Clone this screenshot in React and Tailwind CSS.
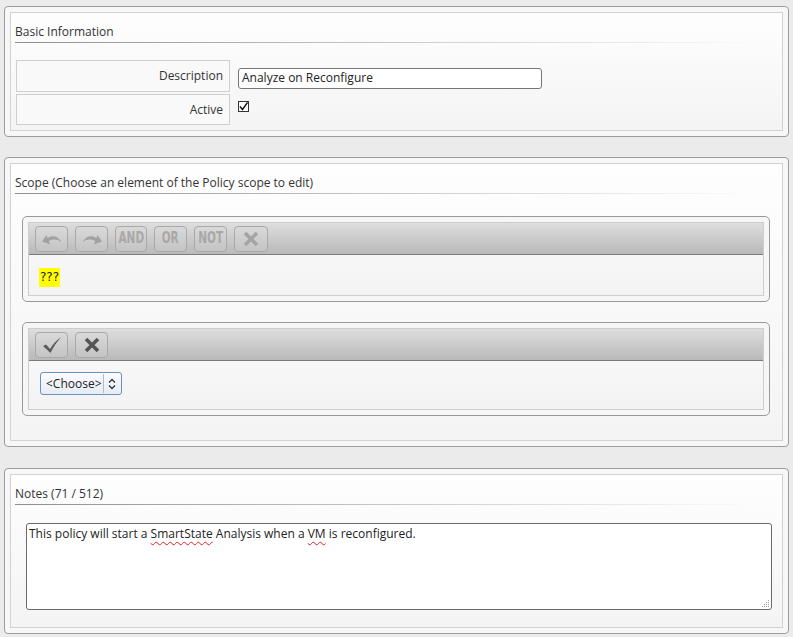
import React from "react";

const font = { fontFamily: '"Open Sans", "Noto Sans", sans-serif' };

function Panel({ title, children, className = "" }) {
  return (
    <div className={"rounded-[4px] border border-[#9c9c9c] bg-[#f7f7f7] p-[5px] " + className}>
      <div className="border border-[#d2d2d2] bg-gradient-to-b from-[#fefefe] to-[#f4f4f4] px-[4px]">
        <div className="pt-[9px] text-[12px] leading-[20px] text-[#333]">{title}</div>
        <div className="h-px bg-gradient-to-r from-[#8f8f8f] via-[#c8c8c8] to-transparent mr-[20px]" />
        {children}
      </div>
    </div>
  );
}

function ToolBtn({ children, w = "w-[33px]" }) {
  return (
    <div className={"flex h-[26px] items-center justify-center rounded-[4px] border border-[#a9a9a9] bg-gradient-to-b from-[#d9d9d9] to-[#c4c4c4] " + w}>
      {children}
    </div>
  );
}

function Undo({ flip }) {
  return (
    <svg width="22" height="14" viewBox="0 0 22 14" style={flip ? { transform: "scaleX(-1)" } : undefined}>
      <path d="M1 9.5 L5.5 3 L6.6 6 C11 3 16.5 3.5 20.5 10 C16 6.8 11.5 6.8 7.8 9 L9.2 12.5 Z" fill="#a2a2a2" />
    </svg>
  );
}

function XIcon({ color }) {
  return (
    <svg width="18" height="18" viewBox="0 0 18 18">
      <path d="M3 3 L15 15 M15 3 L3 15" stroke={color} strokeWidth="3.6" strokeLinecap="butt" />
    </svg>
  );
}

function Check() {
  return (
    <svg width="22" height="18" viewBox="0 0 22 18">
      <path d="M2 10 L5 8.5 L9 13 C12 8 15.5 4 20.5 1 C16 5.5 12.5 10.5 9.5 17 Z" fill="#5a5a5a" />
    </svg>
  );
}

function BtnText({ children }) {
  return (
    <span
      className="text-[15px] font-bold leading-none text-[#a8a8a8]"
      style={{ fontFamily: '"DejaVu Sans", sans-serif', display: "inline-block", transform: "scaleX(0.7)" }}
    >
      {children}
    </span>
  );
}

function Toolbar({ children }) {
  return (
    <div className="flex h-[32px] items-center gap-[7px] border-b border-[#7a7a7a] bg-gradient-to-b from-[#dedede] to-[#b9b9b9] pl-[6px]">
      {children}
    </div>
  );
}

function Box({ children, className = "" }) {
  return (
    <div className={"ml-[7px] mr-[8px] rounded-[5px] border border-[#9a9a9a] bg-[#f6f6f6] p-[5px] " + className}>
      <div className="border border-[#cdcdcd] bg-gradient-to-b from-[#fafafa] to-[#f3f3f3]">{children}</div>
    </div>
  );
}

export default function App() {
  return (
    <div className="h-[637px] w-[793px] bg-[#ebebeb] pt-[6px] pl-[4px] pr-[4px]" style={font}>
      <Panel title="Basic Information">
        <div className="mt-[17px] mb-[5px] ml-px flex flex-col gap-[2px] text-[12px] text-[#333]">
          <div className="flex items-center">
            <div className="flex h-[32px] w-[214px] items-center justify-end border border-[#cfcfcf] bg-[#f9f9f9] pr-[6px]">Description</div>
            <div className="ml-[8px] flex h-[21px] w-[304px] translate-y-[2px] items-center rounded-[3px] border border-[#767676] bg-white pl-[3px] text-[12px] text-[#222]">
              Analyze on Reconfigure
            </div>
          </div>
          <div className="flex items-start">
            <div className="flex h-[31px] w-[214px] items-center justify-end border border-[#cfcfcf] bg-[#f9f9f9] pr-[6px]">Active</div>
            <div className="ml-[8px] mt-[7px] flex h-[11px] w-[11px] items-center justify-center border border-[#333] bg-white">
              <svg width="9" height="9" viewBox="0 0 9 9">
                <path d="M1 4.5 L3.5 7.5 L8.5 0.5" stroke="#111" strokeWidth="1.4" fill="none" />
              </svg>
            </div>
          </div>
        </div>
      </Panel>

      <Panel title="Scope (Choose an element of the Policy scope to edit)" className="mt-[20px]">
        <Box className="mt-[22px]">
          <Toolbar>
            <ToolBtn><Undo /></ToolBtn>
            <ToolBtn><Undo flip /></ToolBtn>
            <ToolBtn w="w-[32px]"><BtnText>AND</BtnText></ToolBtn>
            <ToolBtn><BtnText>OR</BtnText></ToolBtn>
            <ToolBtn><BtnText>NOT</BtnText></ToolBtn>
            <ToolBtn w="w-[34px]"><XIcon color="#a4a4a4" /></ToolBtn>
          </Toolbar>
          <div className="h-[40px] pl-[10px] pt-[8px]">
            <span className="inline-block bg-[#ffff00] px-px text-[12px] leading-[19px] text-[#222]" style={{ fontFamily: '"DejaVu Sans", sans-serif' }}>???</span>
          </div>
        </Box>
        <Box className="mt-[20px] mb-[24px]">
          <Toolbar>
            <ToolBtn><Check /></ToolBtn>
            <ToolBtn><XIcon color="#555" /></ToolBtn>
          </Toolbar>
          <div className="h-[48px] pl-[11px] pt-[11px]">
            <div className="flex h-[23px] w-[82px] items-center rounded-[3px] border border-[#6d8fc4] bg-gradient-to-b from-[#fbfcfe] to-[#e6ecf5] text-[12px] text-[#222]">
              <span className="pl-[5px]">&lt;Choose&gt;</span>
              <span className="ml-[1px] h-[19px] w-px bg-[#b8b8b8]" />
              <svg width="14" height="14" viewBox="0 0 14 14" className="ml-[1px]">
                <path d="M4 5.5 L7 2.5 L10 5.5 M4 8.5 L7 11.5 L10 8.5" stroke="#333" strokeWidth="1.3" fill="none" />
              </svg>
            </div>
          </div>
        </Box>
      </Panel>

      <Panel title="Notes (71 / 512)" className="mt-[21px]">
        <div className="relative ml-[11px] mr-[6px] mt-[18px] mb-[17px] h-[87px] rounded-[3px] border border-[#6a6a6a] bg-white pl-[2px] pt-px text-[12px] leading-[18px] text-[#222]">
          This policy will start a{" "}
          <span className="underline decoration-wavy decoration-[#e02020] decoration-1 underline-offset-[3px]">SmartState</span>{" "}
          Analysis when a{" "}
          <span className="underline decoration-wavy decoration-[#e02020] decoration-1 underline-offset-[3px]">VM</span>{" "}
          is reconfigured.
          <svg width="10" height="10" viewBox="0 0 10 10" className="absolute bottom-[1px] right-[1px]">
            <g fill="#999">
              <rect x="8" y="2" width="1" height="1" />
              <rect x="6" y="4" width="1" height="1" />
              <rect x="8" y="4" width="1" height="1" />
              <rect x="4" y="6" width="1" height="1" />
              <rect x="6" y="6" width="1" height="1" />
              <rect x="8" y="6" width="1" height="1" />
              <rect x="2" y="8" width="1" height="1" />
              <rect x="4" y="8" width="1" height="1" />
              <rect x="6" y="8" width="1" height="1" />
              <rect x="8" y="8" width="1" height="1" />
            </g>
          </svg>
        </div>
      </Panel>
    </div>
  );
}
